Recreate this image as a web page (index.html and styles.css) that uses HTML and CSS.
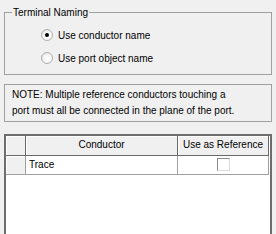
FILE: index.html
```html
<!DOCTYPE html>
<html lang="en">
<head>
    <meta charset="UTF-8">
    <title>Terminal Naming</title>
    <link rel="stylesheet" href="styles.css">
</head>
<body>
<div class="page">
    <fieldset class="group">
        <legend>Terminal Naming</legend>
        <label class="opt">
            <span class="radio checked"></span>
            <span>Use conductor name</span>
        </label>
        <label class="opt">
            <span class="radio"></span>
            <span>Use port object name</span>
        </label>
    </fieldset>
    <div class="note">
        NOTE: Multiple reference conductors touching a<br>
        port must all be connected in the plane of the port.
    </div>
    <div class="grid">
        <div class="row head">
            <div class="cell rh"></div>
            <div class="cell name">Conductor</div>
            <div class="cell ref">Use as Reference</div>
        </div>
        <div class="row">
            <div class="cell rh"></div>
            <div class="cell name">Trace</div>
            <div class="cell ref"><span class="check"></span></div>
        </div>
    </div>
</div>
</body>
</html>
```

FILE: styles.css
```css
*{
    margin: 0;
    padding: 0;
    box-sizing: border-box;
}
body{
    background: #f0f0f0;
    font-family: "Liberation Sans", Arial, sans-serif;
    font-size: 10px;
    color: #000;
    overflow: hidden;
}
.page{
    padding: 0 4px;
    height: 234px;
    display: flex;
    flex-direction: column;
    overflow: hidden;
}
.group{
    margin-top: 6px;
    border: 1px solid #a0a0a0;
    padding: 10px 7px 11px;
    height: 69px;
    flex: none;
}
.group legend{
    padding: 0 1px;
    line-height: 13px;
}
.opt{
    display: flex;
    align-items: center;
    height: 12px;
    margin-left: 29px;
    margin-bottom: 11px;
}
.radio{
    width: 12px;
    height: 12px;
    border-radius: 50%;
    border: 1px solid #b0b0b0;
    background: radial-gradient(circle at 60% 60%, #fff 0, #f4f4f4 50%, #d8d8d8 100%);
    margin-right: 5px;
    position: relative;
}
.radio.checked::after{
    content: "";
    position: absolute;
    left: 3px;
    top: 3px;
    width: 4px;
    height: 4px;
    border-radius: 50%;
    background: #000;
}
.note{
    margin-top: 9px;
    border: 1px solid #a0a0a0;
    height: 38px;
    padding: 2px 7px;
    line-height: 16px;
    flex: none;
}
.grid{
    margin-top: 12px;
    flex: 1;
    min-height: 0;
    background: #fff;
    border: 2px solid #6d6d6d;
    border-bottom: 0;
}
.row{
    display: flex;
}
.cell{
    border-right: 1px solid #a0a0a0;
    border-bottom: 1px solid #a0a0a0;
    height: 19px;
    line-height: 18px;
    padding: 0 3px;
    white-space: nowrap;
}
.head .cell{
    height: 20px;
    background: #f0f0f0;
    border-right: 1px solid #696969;
    border-bottom: 1px solid #696969;
    text-align: center;
    box-shadow: inset 1px 1px 0 #fff;
}
.rh{
    width: 20px;
    background: #f0f0f0;
    box-shadow: inset 1px 1px 0 #fff;
}
.name{
    width: 152px;
}
.ref{
    width: 91px;
    text-align: center;
}
.check{
    display: inline-block;
    width: 13px;
    height: 13px;
    border: 1px solid #8c8c8c;
    border-right-color: #dcdcdc;
    border-bottom-color: #dcdcdc;
    background: #fff;
    vertical-align: middle;
    margin-top: -2px;
}
```
